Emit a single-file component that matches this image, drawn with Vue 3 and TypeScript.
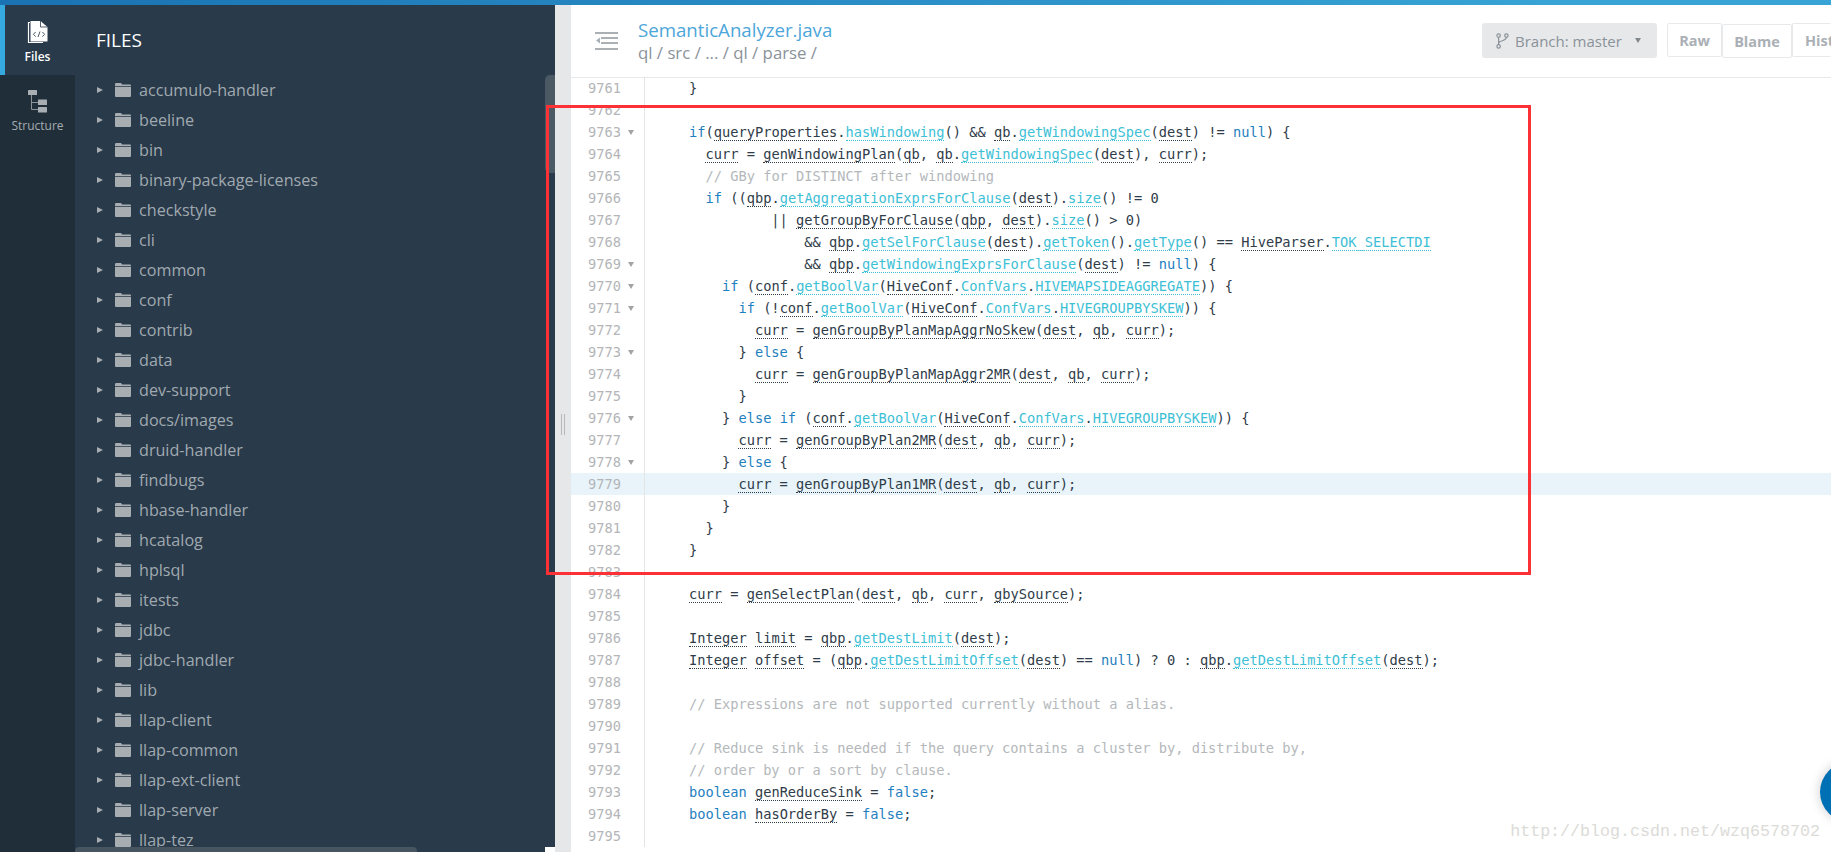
<script setup lang="ts">
type Tok = { t: string; c: string };

const folders: string[] = [
  'accumulo-handler', 'beeline', 'bin', 'binary-package-licenses', 'checkstyle', 'cli', 'common',
  'conf', 'contrib', 'data', 'dev-support', 'docs/images', 'druid-handler', 'findbugs',
  'hbase-handler', 'hcatalog', 'hplsql', 'itests', 'jdbc', 'jdbc-handler', 'lib', 'llap-client',
  'llap-common', 'llap-ext-client', 'llap-server', 'llap-tez',
];

const source: string[] = [
  '    }',
  '',
  '    if(queryProperties.hasWindowing() && qb.getWindowingSpec(dest) != null) {',
  '      curr = genWindowingPlan(qb, qb.getWindowingSpec(dest), curr);',
  '      // GBy for DISTINCT after windowing',
  '      if ((qbp.getAggregationExprsForClause(dest).size() != 0',
  '              || getGroupByForClause(qbp, dest).size() > 0)',
  '                  && qbp.getSelForClause(dest).getToken().getType() == HiveParser.TOK_SELECTDI',
  '                  && qbp.getWindowingExprsForClause(dest) != null) {',
  '        if (conf.getBoolVar(HiveConf.ConfVars.HIVEMAPSIDEAGGREGATE)) {',
  '          if (!conf.getBoolVar(HiveConf.ConfVars.HIVEGROUPBYSKEW)) {',
  '            curr = genGroupByPlanMapAggrNoSkew(dest, qb, curr);',
  '          } else {',
  '            curr = genGroupByPlanMapAggr2MR(dest, qb, curr);',
  '          }',
  '        } else if (conf.getBoolVar(HiveConf.ConfVars.HIVEGROUPBYSKEW)) {',
  '          curr = genGroupByPlan2MR(dest, qb, curr);',
  '        } else {',
  '          curr = genGroupByPlan1MR(dest, qb, curr);',
  '        }',
  '      }',
  '    }',
  '',
  '    curr = genSelectPlan(dest, qb, curr, gbySource);',
  '',
  '    Integer limit = qbp.getDestLimit(dest);',
  '    Integer offset = (qbp.getDestLimitOffset(dest) == null) ? 0 : qbp.getDestLimitOffset(dest);',
  '',
  '    // Expressions are not supported currently without a alias.',
  '',
  '    // Reduce sink is needed if the query contains a cluster by, distribute by,',
  '    // order by or a sort by clause.',
  '    boolean genReduceSink = false;',
  '    boolean hasOrderBy = false;',
  '',
];

const foldable = new Set<number>([9763, 9769, 9770, 9771, 9773, 9776, 9778]);
const keywords = new Set<string>(['if', 'else', 'boolean', 'null', 'false']);

function tokenize(line: string): Tok[] {
  const slash = line.indexOf('//');
  if (slash >= 0) {
    return [{ t: line.slice(0, slash), c: '' }, { t: line.slice(slash), c: 'comment' }];
  }
  const out: Tok[] = [];
  const re = /[A-Za-z_][A-Za-z0-9_]*|[^A-Za-z_]+/g;
  let m: RegExpExecArray | null;
  let prev = '';
  while ((m = re.exec(line))) {
    const t = m[0];
    if (!/^[A-Za-z_]/.test(t)) out.push({ t, c: '' });
    else if (keywords.has(t)) out.push({ t, c: 'kw' });
    else if (prev.endsWith('.')) out.push({ t, c: 'member' });
    else out.push({ t, c: 'ident' });
    prev = t;
  }
  return out;
}

const rows = source.map((text, i) => {
  const n = 9761 + i;
  return { n, toks: tokenize(text), fold: foldable.has(n), active: n === 9779 };
});
</script>

<template>
  <div class="page">
    <div class="topbar"></div>
    <div class="main">
      <nav class="rail">
        <div class="tab tab-active">
          <svg class="tab-icon" width="22" height="24" viewBox="0 0 22 24">
            <path d="M3 2.5H1.5V22.5H16" fill="none" stroke="#fff" stroke-width="1.2" />
            <path d="M3.5 1H13.5L20.5 7V21.5H3.5Z" fill="#fff" />
            <path d="M13.5 1V7H20.5" fill="none" stroke="#293a4a" stroke-width="0.8" />
            <path d="M8.6 12L6.4 14.3L8.6 16.6M15.4 12L17.6 14.3L15.4 16.6M13 11.5L11 17" fill="none" stroke="#4b5a66" stroke-width="1" />
          </svg>
          <span class="tab-label">Files</span>
        </div>
        <div class="tab">
          <svg class="tab-icon" width="20" height="23" viewBox="0 0 20 23">
            <rect x="0" y="0" width="9" height="5" rx="0.5" fill="#a9aeb2" />
            <path d="M3.5 5V19.5H10M3.5 12.5H10" fill="none" stroke="#8b949a" stroke-width="1" />
            <rect x="10" y="9.5" width="9" height="5.5" rx="0.5" fill="#a9aeb2" />
            <rect x="10" y="17" width="9" height="5.5" rx="0.5" fill="#a9aeb2" />
          </svg>
          <span class="tab-label">Structure</span>
        </div>
      </nav>

      <aside class="sidebar">
        <h2 class="files-title">FILES</h2>
        <ul class="tree">
          <li v-for="name in folders" :key="name" class="tree-row">
            <i class="arrow"></i>
            <svg class="folder" width="16" height="14" viewBox="0 0 16 14">
              <path d="M0 1.2Q0 0 1.2 0H6L7.2 1.6H15Q16 1.6 16 2.6V3.2H0ZM0 4H16V13Q16 14 15 14H1Q0 14 0 13Z" fill="#a7adb1" />
            </svg>
            <span class="tree-name">{{ name }}</span>
          </li>
        </ul>
        <div class="vscroll"></div>
        <div class="hscroll"></div>
        <div class="corner"></div>
      </aside>

      <div class="splitter"><i class="grip"></i></div>

      <section class="content">
        <header class="head">
          <svg class="menu-icon" width="23" height="18" viewBox="0 0 23 18">
            <path d="M0 1H23M6 6H23M6 11H23M0 17H23" fill="none" stroke="#aab0b4" stroke-width="2" />
            <path d="M5 5.6V11.4L1 8.5Z" fill="#aab0b4" />
          </svg>
          <div class="head-text">
            <div class="file-name">SemanticAnalyzer.java</div>
            <div class="file-path">ql / src / ... / ql / parse /</div>
          </div>
          <div class="branch">
            <svg width="13" height="16" viewBox="0 0 13 16">
              <g fill="none" stroke="#8a9299" stroke-width="1.2">
                <circle cx="2.6" cy="2.6" r="1.7" />
                <circle cx="10.4" cy="2.6" r="1.7" />
                <circle cx="2.6" cy="13.4" r="1.7" />
                <path d="M2.6 4.3V11.7M10.4 4.3C10.4 8.5 2.6 7 2.6 10.5" />
              </g>
            </svg>
            <span class="branch-text">Branch: master</span>
            <i class="caret"></i>
          </div>
          <div class="btn-group">
            <div class="btn raw">Raw</div>
            <div class="btn blame">Blame</div>
            <div class="btn hist">Hist</div>
          </div>
        </header>
        <div class="code">
          <div v-for="r in rows" :key="r.n" class="row" :class="{ active: r.active }">
            <div class="gutter">
              <span class="num">{{ r.n }}</span>
              <i v-if="r.fold" class="fold"></i>
            </div>
            <div class="line"><span v-for="(tok, i) in r.toks" :key="i" :class="tok.c">{{ tok.t }}</span></div>
          </div>
        </div>
      </section>
    </div>

    <div class="red-box"></div>
    <div class="fab"></div>
    <div class="watermark">http://blog.csdn.net/wzq6578702</div>
  </div>
</template>

<style>
html, body { margin: 0; height: 100%; overflow: hidden; background: #fff; }
</style>

<style scoped>
.page {
  position: relative;
  width: 1831px;
  height: 852px;
  overflow: hidden;
  display: flex;
  flex-direction: column;
  font-family: "Open Sans", "Noto Sans", sans-serif;
  background: #fff;
}
.topbar {
  height: 5px;
  flex: none;
  background: linear-gradient(90deg, #1a72b2 0%, #37a4d5 85%, #37a4d5 100%);
}
.main { flex: 1; display: flex; min-height: 0; }

.rail { width: 75px; flex: none; background: #202e39; }
.tab {
  height: 70px;
  display: flex;
  flex-direction: column;
  align-items: center;
  padding-top: 15px;
  box-sizing: border-box;
  color: #a4acb2;
}
.tab-active {
  background: #293a4a;
  border-left: 5px solid #36a9de;
  padding-right: 5px;
  color: #fff;
}
.tab-icon { display: block; }
.tab-label { font-size: 12px; line-height: 16px; margin-top: 5px; }
.tab-active .tab-label { font-weight: 600; }

.sidebar {
  position: relative;
  width: 480px;
  flex: none;
  background: #293a4a;
  display: flex;
  flex-direction: column;
  overflow: hidden;
}
.files-title {
  margin: 0;
  height: 70px;
  flex: none;
  box-sizing: border-box;
  padding: 22px 0 0 21px;
  font-size: 19px;
  line-height: 26px;
  font-weight: 400;
  color: #fff;
}
.tree { list-style: none; margin: 0; padding: 0; flex: 1; min-height: 0; overflow: hidden; }
.tree-row {
  height: 30px;
  display: flex;
  align-items: center;
  padding-left: 22px;
}
.arrow {
  width: 0;
  height: 0;
  border-left: 6px solid #a7adb1;
  border-top: 3.5px solid transparent;
  border-bottom: 3.5px solid transparent;
  margin-right: 12px;
}
.folder { flex: none; margin-right: 8px; }
.tree-name { font-size: 16.15px; line-height: 30px; color: #a0a9b0; white-space: nowrap; }
.vscroll {
  position: absolute;
  right: 0;
  top: 70px;
  width: 10px;
  height: 98px;
  border-radius: 5px 0 0 5px;
  background: #4a5964;
}
.hscroll {
  position: absolute;
  left: 0;
  bottom: 0;
  width: 342px;
  height: 5px;
  border-radius: 4px 4px 0 0;
  background: #46555f;
}
.corner {
  position: absolute;
  right: 0;
  bottom: 0;
  width: 10px;
  height: 5px;
  background: #fff;
}

.splitter {
  width: 16px;
  flex: none;
  background: #e6e7e9;
  display: flex;
  align-items: center;
  justify-content: center;
}
.grip {
  width: 2px;
  height: 21px;
  margin-top: -9px;
  border-left: 1px solid #b4b9bd;
  border-right: 1px solid #b4b9bd;
}

.content { flex: 1; min-width: 0; display: flex; flex-direction: column; }
.head {
  height: 73px;
  flex: none;
  box-sizing: border-box;
  border-bottom: 1px solid #e8e9eb;
  display: flex;
  align-items: flex-start;
  padding-left: 24px;
}
.menu-icon { flex: none; margin-top: 27px; margin-right: 20px; }
.head-text { flex: 1; min-width: 0; padding-top: 13px; }
.file-name { font-size: 18.67px; line-height: 24px; color: #4da6da; }
.file-path { font-size: 16.8px; line-height: 22px; color: #8a9299; }
.branch {
  margin-top: 18px;
  width: 175px;
  height: 35px;
  flex: none;
  box-sizing: border-box;
  padding-left: 14px;
  background: #e7e8ea;
  border-radius: 3px;
  display: flex;
  align-items: center;
  color: #8a9299;
}
.branch-text { font-size: 15px; margin-left: 6px; }
.caret {
  margin-left: 13px;
  width: 0;
  height: 0;
  border-top: 5px solid #80878d;
  border-left: 3px solid transparent;
  border-right: 3px solid transparent;
}
.btn-group {
  width: 164px;
  flex: none;
  margin-left: 10px;
  margin-top: 18px;
  display: flex;
  align-items: flex-start;
}
.btn {
  flex: none;
  height: 34px;
  box-sizing: border-box;
  border: 1px solid #e8e9eb;
  border-radius: 2px;
  font-size: 14.5px;
  font-weight: 700;
  color: #aab0b5;
  display: flex;
  align-items: center;
  justify-content: center;
  white-space: nowrap;
}
.raw { width: 55px; }
.blame { width: 70px; margin-top: 1px; }
.hist { width: 39px; justify-content: flex-start; padding-left: 12px; border-right: 0; }

.code { flex: 1; min-height: 0; margin-top: -1px; overflow: hidden; font-family: "DejaVu Sans Mono", "Liberation Mono", monospace; font-size: 13.7px; }
.row { height: 22px; display: flex; line-height: 22px; }
.row.active { background: #e8f4fa; }
.gutter {
  position: relative;
  width: 74px;
  flex: none;
  box-sizing: border-box;
  border-right: 1px solid #e3e4e6;
  color: #b3b5b8;
  text-align: right;
  padding-right: 23px;
}
.fold {
  position: absolute;
  left: 57px;
  top: 9px;
  width: 0;
  height: 0;
  border-top: 5px solid #a3a3a3;
  border-left: 3px solid transparent;
  border-right: 3px solid transparent;
}
.line { padding-left: 11px; white-space: pre; color: #2f3c49; }
.kw { color: #1f80c0; }
.member { color: #3dc0d6; border-bottom: 1px dotted #3dc0d6; }
.ident { border-bottom: 1px dotted #2f3c49; }
.comment { color: #b4b8bb; }

.red-box {
  position: absolute;
  left: 546px;
  top: 105px;
  width: 985px;
  height: 470px;
  box-sizing: border-box;
  border: 3px solid #fb3135;
  pointer-events: none;
}
.fab {
  position: absolute;
  left: 1820px;
  top: 762px;
  width: 60px;
  height: 60px;
  border-radius: 50%;
  background: #0070b5;
  box-shadow: 0 0 12px rgba(0, 0, 0, 0.2);
}
.watermark {
  position: absolute;
  right: 11px;
  top: 821px;
  font-family: "Liberation Mono", monospace;
  font-size: 16.67px;
  line-height: 22px;
  color: #dbdbd7;
  white-space: nowrap;
}
</style>
